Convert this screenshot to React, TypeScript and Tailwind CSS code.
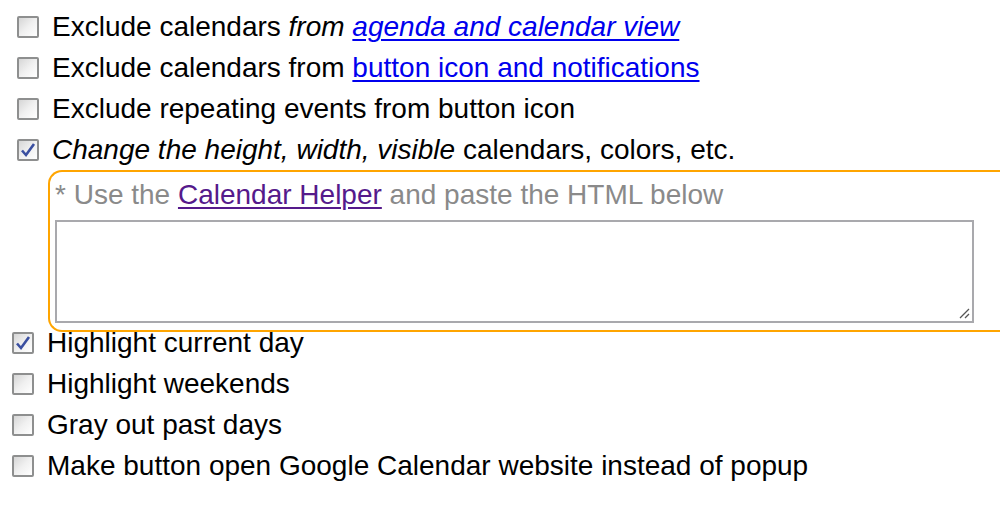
import React from 'react';

const Check = ({ checked }: { checked?: boolean }) => (
  <span className="w-[22px] h-[22px] shrink-0 border-2 border-[#8e8f8f] rounded-[2px] bg-gradient-to-br from-[#d6d6d6] via-[#f0f0f0] to-[#ffffff] flex items-center justify-center">
    {checked && (
      <svg width="16" height="16" viewBox="0 0 16 16">
        <path d="M2 8.5 L6 13 L14 2" fill="none" stroke="#3a4fa0" strokeWidth="2.6" />
      </svg>
    )}
  </span>
);

const Row = ({ checked, children }: { checked?: boolean; children: React.ReactNode }) => (
  <label className="flex items-center gap-[13px] h-[41px] whitespace-nowrap">
    <Check checked={checked} />
    <span>{children}</span>
  </label>
);

const link = 'text-[#0000ee] underline underline-offset-[3px] decoration-[2px]';

const App = () => {
  return (
    <div className="w-[1000px] h-[506px] overflow-hidden bg-white text-[28px] text-black font-['Liberation_Sans',Arial,sans-serif] leading-none">
      <div className="pl-[17px] pt-[6px]">
        <Row>
          Exclude calendars <i>from</i> <a className={`${link} italic`}>agenda and calendar view</a>
        </Row>
        <Row>
          Exclude calendars from <a className={link}>button icon and notifications</a>
        </Row>
        <Row>Exclude repeating events from button icon</Row>
        <Row checked>
          <i>Change the height, width, visible</i> calendars, colors, etc.
        </Row>
      </div>
      <div className="ml-[48px] h-[162px] border-2 border-r-0 border-[#ffa500] rounded-l-[14px] pl-[5px] pt-[9px]">
        <div className="text-[#8a8a8a] whitespace-nowrap">
          * Use the <a className="text-[#551a8b] underline underline-offset-[3px] decoration-[2px]">Calendar Helper</a> and paste the HTML below
        </div>
        <div className="relative mt-[11px] w-[919px] h-[103px] border-2 border-[#a9a9ad]">
          <svg className="absolute right-[2px] bottom-[2px]" width="12" height="12" viewBox="0 0 12 12">
            <path d="M11 2 L2 11 M11 7 L7 11" stroke="#555" strokeWidth="1.3" />
          </svg>
        </div>
      </div>
      <div className="pl-[12px] -mt-[10px]">
        <Row checked>Highlight current day</Row>
        <Row>Highlight weekends</Row>
        <Row>Gray out past days</Row>
        <Row>Make button open Google Calendar website instead of popup</Row>
      </div>
    </div>
  );
};

export default App;
